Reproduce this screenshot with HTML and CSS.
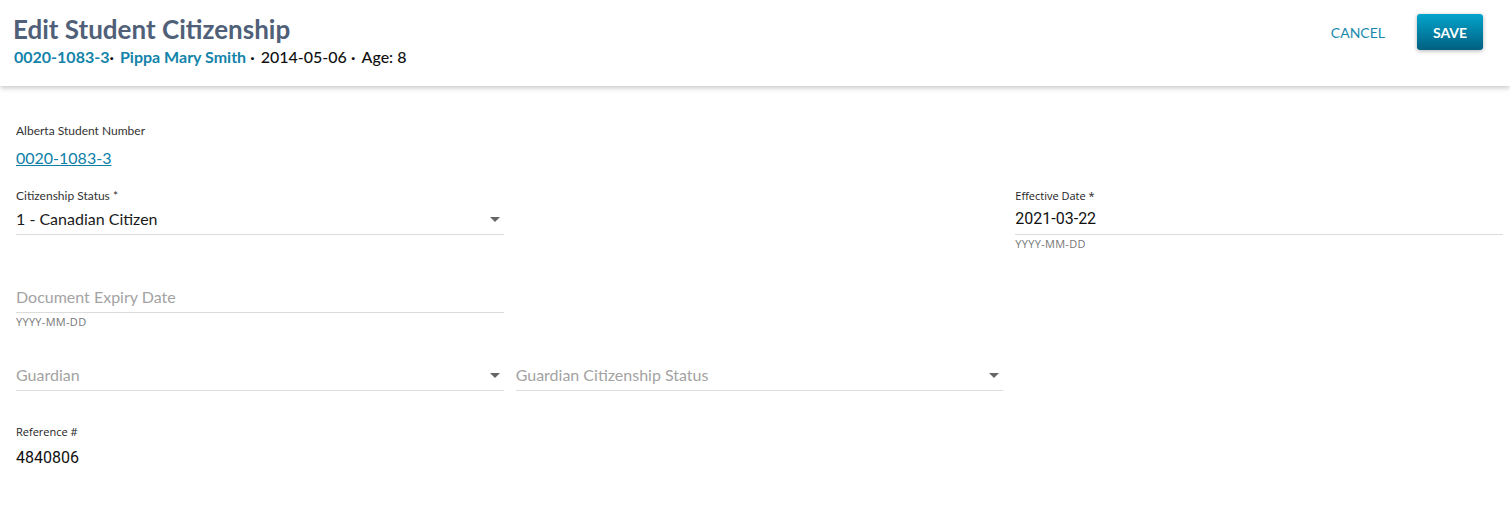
FILE: index.html
```html
<!DOCTYPE html>
<html lang="en">
<head>
	<meta charset="UTF-8">
	<meta name="viewport" content="width=device-width, initial-scale=1.0">
	<title>Edit Student Citizenship</title>
	<link rel="stylesheet" href="styles.css">
</head>
<body>
	<header class="page_head">
		<div class="head_text">
			<h1 class="title">Edit Student Citizenship</h1>
			<div class="sub">
				<a class="sub_link" href="#">0020-1083-3</a><span class="dot">&middot;</span>
				<a class="sub_link" href="#">Pippa Mary Smith</a>
				<span class="dot">&middot;</span> <span class="sub_text">2014-05-06</span>
				<span class="dot">&middot;</span> <span class="sub_text">Age: 8</span>
			</div>
		</div>
		<div class="actions">
			<button class="btn_cancel">CANCEL</button>
			<button class="btn_save">SAVE</button>
		</div>
	</header>

	<section class="form">
		<div class="row">
			<div class="field">
				<div class="label">Alberta Student Number</div>
				<a class="asn" href="#">0020-1083-3</a>
			</div>
		</div>

		<div class="row row_status">
			<div class="field">
				<div class="label">Citizenship Status *</div>
				<div class="input">
					<span class="value">1 - Canadian Citizen</span>
					<span class="arrow"></span>
				</div>
			</div>
			<div></div>
			<div class="field">
				<div class="label label_alt">Effective Date *</div>
				<div class="input">
					<span class="value value_num">2021-03-22</span>
				</div>
				<div class="helper">YYYY-MM-DD</div>
			</div>
		</div>

		<div class="row row_expiry">
			<div class="field">
				<div class="input">
					<span class="placeholder">Document Expiry Date</span>
				</div>
				<div class="helper">YYYY-MM-DD</div>
			</div>
		</div>

		<div class="row row_guardian">
			<div class="field">
				<div class="input">
					<span class="placeholder">Guardian</span>
					<span class="arrow"></span>
				</div>
			</div>
			<div class="field">
				<div class="input">
					<span class="placeholder">Guardian Citizenship Status</span>
					<span class="arrow"></span>
				</div>
			</div>
		</div>

		<div class="row row_ref">
			<div class="field">
				<div class="label label_alt">Reference #</div>
				<div class="ref">4840806</div>
			</div>
		</div>
	</section>
</body>
</html>
```

FILE: styles.css
```css
*{margin:0; padding:0; box-sizing:border-box;}
body{
	background:#fff;
	font-family:Lato, "Open Sans", sans-serif;
	color:#1c1c1c;
}
a{color:#0d80a8;}
.page_head{
	display:flex;
	justify-content:space-between;
	height:86px;
	padding:12px 27px 0 13px;
	background:#fff;
	box-shadow:0 2px 5px rgba(0,0,0,0.22);
	position:relative;
}
.title{
	font-size:26px;
	font-weight:700;
	color:#4f6078;
	line-height:34px;
}
.sub{
	font-size:16px;
	line-height:22px;
	padding-left:1px;
}
.sub_link{
	color:#1383aa;
	font-weight:700;
	text-decoration:none;
}
.sub_text{
	font-weight:500;
	color:#111;
}
.dot{
	font-weight:700;
	color:#111;
	margin:0 2px 0 0;
}
.actions{
	display:flex;
	align-items:flex-start;
	gap:30px;
	padding-top:2px;
}
.btn_cancel{
	border:none;
	background:none;
	font-family:Lato, sans-serif;
	font-size:14px;
	color:#1a89ad;
	height:36px;
	padding:0 2px;
}
.btn_save{
	border:none;
	width:66px;
	height:36px;
	border-radius:3px;
	background:linear-gradient(#04a4cc, #005f80);
	color:#fff;
	font-family:Lato, sans-serif;
	font-size:14px;
	font-weight:700;
	box-shadow:0 1px 4px rgba(0,0,0,0.3);
}
.form{
	padding:38px 7px 0 16px;
}
.row{
	display:grid;
	grid-template-columns:repeat(3, 1fr);
	column-gap:12px;
}
.label{
	font-size:12px;
	color:#333;
	line-height:14px;
}
.label_alt{
	font-family:"Open Sans", sans-serif;
	font-size:11px;
	color:#222;
}
.asn{
	display:inline-block;
	margin-top:10px;
	font-size:16px;
	line-height:20px;
}
.row_status{margin-top:21px;}
.input{
	display:flex;
	align-items:center;
	justify-content:space-between;
	padding:6px 4px 5px 0;
	line-height:20px;
	border-bottom:1px solid #dcdcdc;
}
.value{
	font-size:16px;
	color:#1a1a1a;
}
.value_num{
	font-family:Roboto, sans-serif;
	color:#111;
}
.placeholder{
	font-size:16px;
	color:#a3a3a3;
}
.arrow{
	width:0;
	height:0;
	border-left:5px solid transparent;
	border-right:5px solid transparent;
	border-top:5px solid #666;
}
.helper{
	font-family:"Open Sans", sans-serif;
	font-size:11px;
	letter-spacing:0.3px;
	color:#777;
	line-height:14px;
	margin-top:2px;
}
.row_expiry{margin-top:30px;}
.row_guardian{margin-top:30px;}
.row_ref{margin-top:34px;}
.ref{
	margin-top:9px;
	font-family:Roboto, sans-serif;
	font-size:16px;
	line-height:20px;
	color:#111;
}
```
